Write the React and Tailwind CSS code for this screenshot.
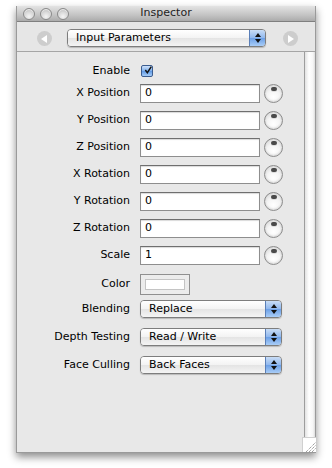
import React from "react";

const font = { fontFamily: '"DejaVu Sans", Verdana, sans-serif' };

function Knob() {
  return (
    <div className="relative h-[19px] w-[19px] shrink-0 rounded-full border border-[#8c8c8c] bg-[radial-gradient(circle_at_50%_70%,#ffffff_0%,#f4f4f4_45%,#cfcfcf_100%)] shadow-[inset_0_-1px_2px_rgba(0,0,0,0.12)]">
      <div className="absolute left-1/2 top-[2px] h-[4px] w-[6px] -translate-x-1/2 rounded-full bg-[#4a4a4a] shadow-[0_1px_0_#ddd]" />
    </div>
  );
}

function Popup({ label, width }) {
  return (
    <div
      className={`flex h-[18px] ${width} overflow-hidden rounded-[4px] border border-[#7d7d7d] shadow-[0_1px_1px_rgba(0,0,0,0.2)]`}
    >
      <div className="flex flex-1 items-center bg-[linear-gradient(#ffffff,#f3f3f3_50%,#e4e4e4_51%,#f4f4f4)] pl-[8px] text-[11px] text-black">
        {label}
      </div>
      <div className="flex w-[16px] flex-col items-center justify-center gap-[2px] border-l border-[#5a7fb8] bg-[linear-gradient(#c9ddf6,#8fb7ee_50%,#6b9fe6_51%,#a9cdf7)]">
        <svg width="6" height="4" viewBox="0 0 6 4">
          <path d="M3 0 L6 4 L0 4 Z" fill="#111" />
        </svg>
        <svg width="6" height="4" viewBox="0 0 6 4">
          <path d="M0 0 L6 0 L3 4 Z" fill="#111" />
        </svg>
      </div>
    </div>
  );
}

function NavButton({ dir }) {
  return (
    <div className="flex h-[15px] w-[15px] items-center justify-center rounded-full bg-[#cdcdcd]">
      <svg width="7" height="8" viewBox="0 0 7 8">
        {dir === "left" ? (
          <path d="M6 0 L6 8 L0 4 Z" fill="#fff" />
        ) : (
          <path d="M1 0 L1 8 L7 4 Z" fill="#fff" />
        )}
      </svg>
    </div>
  );
}

function Light() {
  return (
    <div className="h-[12px] w-[12px] rounded-full border border-[#8a8a8a] bg-[radial-gradient(circle_at_50%_75%,#f4f4f4_0%,#d8d8d8_50%,#a9a9a9_100%)] shadow-[inset_0_1px_1px_rgba(255,255,255,0.8)]" />
  );
}

const fields = [
  ["X Position", "0"],
  ["Y Position", "0"],
  ["Z Position", "0"],
  ["X Rotation", "0"],
  ["Y Rotation", "0"],
  ["Z Rotation", "0"],
  ["Scale", "1"],
];

export default function App() {
  return (
    <div className="h-[468px] w-[332px] bg-white pl-[16px] pt-[6px]" style={font}>
      <div className="flex h-[447px] w-[300px] flex-col border-x border-b border-[#9a9a9a] bg-[#e8e8e8] shadow-[0_4px_8px_rgba(0,0,0,0.45)]">
        {/* title bar */}
        <div className="relative flex h-[16px] items-center border-b border-[#7f7f7f] bg-[linear-gradient(#e3e3e3,#c4c4c4_60%,#ababab)]">
          <div className="flex gap-[5px] pl-[6px]">
            <Light />
            <Light />
            <Light />
          </div>
          <div className="absolute inset-0 flex items-center justify-center text-[11px] text-[#1e1e1e]">
            Inspector
          </div>
        </div>

        {/* toolbar */}
        <div className="flex h-[30px] items-start border-b border-[#a5a5a5] bg-[#e6e6e6] pl-[20px] pt-[7px]">
          <div className="mt-[2px]">
            <NavButton dir="left" />
          </div>
          <div className="ml-[15px]">
            <Popup label="Input Parameters" width="w-[199px]" />
          </div>
          <div className="ml-[17px] mt-[2px]">
            <NavButton dir="right" />
          </div>
        </div>

        {/* body */}
        <div className="flex flex-1">
          <div className="flex flex-1 flex-col bg-[#e8e8e8] pt-[12px] text-[11px] text-black">
            <div className="flex h-[14px] items-center">
              <div className="w-[113px] text-right">Enable</div>
              <div className="ml-[11px] flex h-[12px] w-[12px] items-center justify-center rounded-[2px] border border-[#3c5d8f] bg-[linear-gradient(#cfe2fa,#7eaeea_50%,#5d97e3_51%,#a7cdf7)]">
                <svg width="12" height="12" viewBox="0 0 12 12" className="-mt-[3px] ml-[2px]">
                  <path d="M2 6 L5 10 L11 1" stroke="#111" strokeWidth="2.2" fill="none" />
                </svg>
              </div>
            </div>

            <div className="mt-[6px] flex flex-col gap-[8px]">
              {fields.map(([f, v]) => (
                <div key={f} className="flex h-[19px] items-center">
                  <div className="w-[113px] text-right">{f}</div>
                  <div className="ml-[10px] flex h-[19px] w-[120px] items-center border border-[#8e8e8e] border-t-[#6f6f6f] bg-white pl-[4px] shadow-[inset_0_1px_1px_rgba(0,0,0,0.15)]">
                    {v}
                  </div>
                  <div className="ml-[4px]">
                    <Knob />
                  </div>
                </div>
              ))}
            </div>

            <div className="mt-[9px] flex h-[21px] items-center">
              <div className="w-[113px] text-right">Color</div>
              <div className="ml-[10px] flex h-[21px] w-[50px] items-center justify-center border border-[#8f8f8f] bg-[#ececec]">
                <div className="h-[11px] w-[40px] border border-[#c4c4c4] bg-white" />
              </div>
            </div>

            <div className="mt-[5px] flex flex-col gap-[10px]">
              {[
                ["Blending", "Replace"],
                ["Depth Testing", "Read / Write"],
                ["Face Culling", "Back Faces"],
              ].map(([l, v]) => (
                <div key={l} className="flex h-[18px] items-center">
                  <div className="w-[113px] text-right">{l}</div>
                  <div className="ml-[10px]">
                    <Popup label={v} width="w-[142px]" />
                  </div>
                </div>
              ))}
            </div>
          </div>

          {/* scroll track */}
          <div className="flex w-[11px] flex-col border-l border-[#9d9d9d]">
            <div className="flex-1 bg-[linear-gradient(90deg,#e2e2e2,#ffffff_40%,#f6f6f6_80%,#dcdcdc)]" />
            <div className="relative -ml-[3px] h-[15px] w-[14px] border-l border-t border-[#d0d0d0] bg-white">
              <svg width="14" height="15" viewBox="0 0 14 15" className="absolute inset-0">
                <path d="M3 14 L13 4 M6 14 L13 7 M9 14 L13 10" stroke="#7a7a7a" strokeWidth="1" strokeDasharray="1 1" />
              </svg>
            </div>
          </div>
        </div>
      </div>
    </div>
  );
}
